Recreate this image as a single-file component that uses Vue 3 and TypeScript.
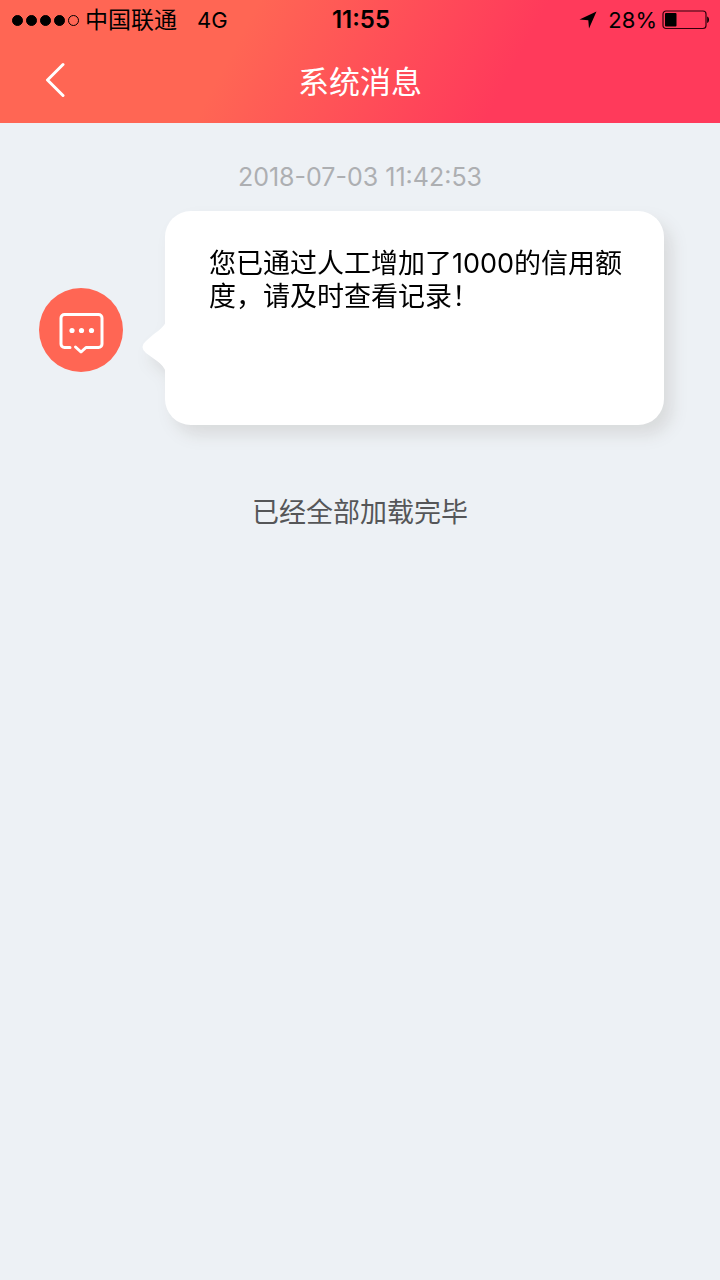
<script setup lang="ts">
interface Message {
  id: number
  time: string
  text: string
}

const title = '系统消息'
const carrier = '中国联通'
const signal = [true, true, true, true, false]
const battery = 28

const messages: Message[] = [
  { id: 1, time: '2018-07-03 11:42:53', text: '您已通过人工增加了1000的信用额度，请及时查看记录！' },
]

function goBack(): void {
  window.history.back()
}
</script>

<template>
  <div class="page">
    <header class="top">
      <div class="status">
        <div class="status-left">
          <span class="signal" aria-hidden="true">
            <i v-for="(on, i) in signal" :key="i" class="dot" :class="{ on }"></i>
          </span>
          <span>{{ carrier }}</span>
          <span class="network">4G</span>
        </div>
        <span class="clock">11:55</span>
        <div class="status-right">
          <svg class="location" viewBox="0 0 18 18" aria-hidden="true">
            <path d="M17.5 .5 10 17.5 9.3 9.3 .5 8.4Z" fill="#000" />
          </svg>
          <span>{{ battery }}%</span>
          <svg class="battery" viewBox="0 0 48 20" aria-hidden="true">
            <rect x="1" y="1" width="43" height="17.5" rx="3" fill="none" stroke="#30000c" stroke-width="1.2" />
            <rect x="3" y="3" width="11.5" height="13.5" rx="1" fill="#000" />
            <path d="M45.2 6.5c2.4.5 2.4 6 0 6.5z" fill="#000" />
          </svg>
        </div>
      </div>
      <nav class="nav">
        <button class="back" type="button" aria-label="返回" @click="goBack">
          <svg viewBox="0 0 20 36" aria-hidden="true">
            <path d="M18 2.500 2.500 18 18 33.500" fill="none" stroke="#fff" stroke-width="3" stroke-linecap="round" stroke-linejoin="round" />
          </svg>
        </button>
        <h1>{{ title }}</h1>
      </nav>
    </header>

    <main class="content">
      <article v-for="m in messages" :key="m.id">
        <time class="time">{{ m.time }}</time>
        <div class="row">
          <div class="avatar">
            <svg viewBox="0 0 84 84" aria-hidden="true">
              <g fill="none" stroke="#fff" stroke-width="3" stroke-linecap="round" stroke-linejoin="round">
                <path d="M31 59.500H25.500a3.500 3.500 0 0 1-3.500-3.500V30a3.500 3.500 0 0 1 3.500-3.500H59.500a3.500 3.500 0 0 1 3.500 3.500V56a3.500 3.500 0 0 1-3.500 3.500H47L42 64 36.500 59" />
              </g>
              <g fill="#fff">
                <circle cx="33" cy="42.500" r="2.600" />
                <circle cx="42.500" cy="42.500" r="2.600" />
                <circle cx="52.500" cy="42.500" r="2.600" />
              </g>
            </svg>
          </div>
          <div class="bubble">
            <svg class="tail" viewBox="0 0 24 50" aria-hidden="true">
              <path d="M24 0C22 4 18 8 12 12L4 19Q-3 25 4 31L15 39Q21 43 24 50Z" fill="#fff" />
            </svg>
            <p>{{ m.text }}</p>
          </div>
        </div>
      </article>
      <p class="end">已经全部加载完毕</p>
    </main>
  </div>
</template>

<style>
body {
  margin: 0;
  background: #edf1f5;
}
</style>

<style scoped>
.page {
  min-height: 100vh;
  background: #edf1f5;
  color: #000;
  font-family: Inter, "Noto Sans CJK SC", sans-serif;
}

.top {
  background: linear-gradient(118deg, #ff6654 33%, #ff3a5b 70%);
}

.status {
  display: grid;
  grid-template-columns: 1fr auto 1fr;
  align-items: center;
  height: 40px;
  padding: 0 10px 0 12px;
  font-size: 23px;
  line-height: 40px;
}

.status-left,
.status-right {
  display: flex;
  align-items: center;
}

.status-right {
  justify-content: flex-end;
  font-size: 22px;
}

.signal {
  display: flex;
  gap: 3px;
  margin-right: 6px;
}

.dot {
  box-sizing: border-box;
  width: 11px;
  height: 11px;
  border: 1px solid #000;
  border-radius: 50%;
}

.dot.on {
  background: #000;
}

.network {
  margin-left: 20px;
  font-size: 22px;
}

.clock {
  font-size: 24px;
  font-weight: 600;
}

.location {
  width: 18px;
  height: 18px;
  margin-right: 11px;
}

.battery {
  width: 48px;
  height: 20px;
  margin-left: 5px;
}

.nav {
  display: grid;
  grid-template-columns: 110px 1fr 110px;
  align-items: center;
  height: 83px;
}

.back {
  display: flex;
  align-items: center;
  height: 83px;
  padding: 0 0 3px 45px;
  border: 0;
  background: none;
  cursor: pointer;
}

.back svg {
  width: 20px;
  height: 36px;
}

h1 {
  margin: 0;
  color: #fff;
  font-size: 31px;
  font-weight: 400;
  line-height: 83px;
  text-align: center;
}

.content {
  padding: 36px 56px 40px 39px;
}

.time {
  display: block;
  margin: 0 -17px 16px 0;
  color: #adafb2;
  font-size: 25px;
  line-height: 36px;
  text-align: center;
}

.row {
  display: flex;
  align-items: flex-start;
  gap: 42px;
}

.avatar {
  flex: none;
  width: 84px;
  height: 84px;
  margin-top: 77px;
  border-radius: 50%;
  background: #ff6654;
}

.avatar svg {
  display: block;
}

.bubble {
  position: relative;
  flex: 1;
  box-sizing: border-box;
  min-height: 214px;
  padding: 36px 32px 36px 44px;
  border-radius: 26px;
  background: #fff;
  filter: drop-shadow(8px 10px 8px rgba(50, 30, 10, 0.1));
}

.tail {
  position: absolute;
  top: 111px;
  left: -23px;
  width: 24px;
  height: 50px;
}

.bubble p {
  margin: 0;
  font-size: 27px;
  line-height: 33px;
}

.end {
  margin: 68px -17px 0 0;
  color: #555658;
  font-size: 27px;
  font-weight: 400;
  line-height: 40px;
  text-align: center;
}
</style>
